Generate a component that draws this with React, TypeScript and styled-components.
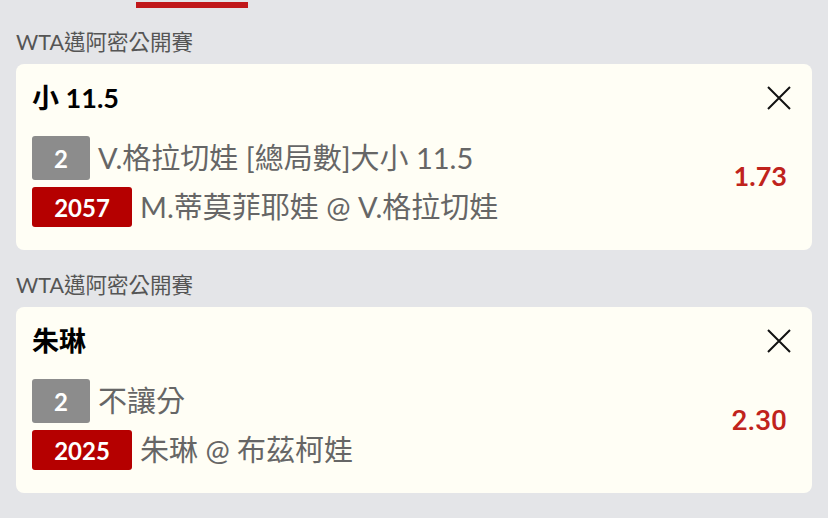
import React from "react";
import styled, { createGlobalStyle } from "styled-components";

const GlobalStyle = createGlobalStyle`
  html, body { margin: 0; padding: 0; background: #e4e5e8; }
  body { font-family: Lato, "Noto Sans CJK TC", sans-serif; }
`;

const Page = styled.div`
  width: 828px;
  height: 518px;
  background: #e4e5e8;
  padding: 0 16px;
  box-sizing: border-box;
  overflow: hidden;
`;

const TabStrip = styled.div`
  height: 8px;
  display: flex;
  align-items: flex-end;
`;

const TabIndicator = styled.div`
  margin-left: 120px;
  width: 112px;
  height: 6px;
  background: #c0181a;
`;

const Section = styled.section<{ $first?: boolean }>`
  padding-top: ${(p) => (p.$first ? "20px" : "21px")};
`;

const League = styled.div`
  font-family: Lato, "Noto Sans CJK TC", sans-serif;
  font-size: 21.5px;
  line-height: 28px;
  color: #555555;
  margin-bottom: 8px;
`;

const Card = styled.div`
  background: #fffef5;
  border-radius: 8px;
  padding: 18px 21px 23px 16px;
  box-sizing: border-box;
  height: 186px;
`;

const CardHeader = styled.div`
  display: flex;
  align-items: center;
  justify-content: space-between;
  height: 32px;
`;

const Title = styled.div`
  font-family: Lato, "Noto Sans CJK TC", sans-serif;
  font-weight: 700;
  font-size: 27px;
  line-height: 32px;
  color: #000;
`;

const CloseButton = styled.button`
  border: none;
  background: none;
  padding: 0;
  width: 24px;
  height: 24px;
  display: flex;
  cursor: pointer;
`;

const CardBody = styled.div`
  display: flex;
  align-items: center;
  justify-content: space-between;
  margin-top: 22px;
`;

const Selections = styled.div`
  display: flex;
  flex-direction: column;
  gap: 7px;
`;

const Row = styled.div`
  display: flex;
  align-items: center;
  gap: 8px;
`;

const Badge = styled.div<{ $variant: "gray" | "red" }>`
  box-sizing: border-box;
  width: ${(p) => (p.$variant === "gray" ? "58px" : "100px")};
  height: ${(p) => (p.$variant === "gray" ? "44px" : "40px")};
  border-radius: 3px;
  background: ${(p) => (p.$variant === "gray" ? "#8c8c8c" : "#b50000")};
  color: #fff;
  font-family: Lato, sans-serif;
  font-weight: 700;
  font-size: 24px;
  display: flex;
  align-items: center;
  justify-content: center;
`;

const RowText = styled.div`
  font-family: Lato, "Noto Sans CJK TC", sans-serif;
  font-size: 29px;
  line-height: 36px;
  color: #666666;
  white-space: nowrap;
`;

const Odds = styled.div<{ $alt?: boolean }>`
  font-family: ${(p) => (p.$alt ? 'Roboto, "Liberation Sans", sans-serif' : "Lato, sans-serif")};
  font-weight: ${(p) => (p.$alt ? 500 : 700)};
  font-size: ${(p) => (p.$alt ? "28px" : "27px")};
  color: #c0231c;
  margin-right: 4px;
  margin-top: ${(p) => (p.$alt ? "-8px" : "-12px")};
`;

const CloseIcon = () => (
  <svg width="24" height="24" viewBox="0 0 24 24">
    <path d="M1 1 L23 23 M23 1 L1 23" stroke="#111" strokeWidth="2" fill="none" />
  </svg>
);

type Bet = {
  league: string;
  title: string;
  market: string;
  code: string;
  match: string;
  odds: string;
  alt?: boolean;
};

const bets: Bet[] = [
  {
    league: "WTA邁阿密公開賽",
    title: "小 11.5",
    market: "V.格拉切娃 [總局數]大小 11.5",
    code: "2057",
    match: "M.蒂莫菲耶娃 @ V.格拉切娃",
    odds: "1.73",
  },
  {
    league: "WTA邁阿密公開賽",
    title: "朱琳",
    market: "不讓分",
    code: "2025",
    match: "朱琳 @ 布茲柯娃",
    odds: "2.30",
    alt: true,
  },
];

export default function App() {
  return (
    <>
      <GlobalStyle />
      <Page>
        <TabStrip>
          <TabIndicator />
        </TabStrip>
        {bets.map((b, i) => (
          <Section key={i} $first={i === 0}>
            <League>{b.league}</League>
            <Card>
              <CardHeader>
                <Title>{b.title}</Title>
                <CloseButton aria-label="close">
                  <CloseIcon />
                </CloseButton>
              </CardHeader>
              <CardBody>
                <Selections>
                  <Row>
                    <Badge $variant="gray">2</Badge>
                    <RowText>{b.market}</RowText>
                  </Row>
                  <Row>
                    <Badge $variant="red">{b.code}</Badge>
                    <RowText>{b.match}</RowText>
                  </Row>
                </Selections>
                <Odds $alt={b.alt}>{b.odds}</Odds>
              </CardBody>
            </Card>
          </Section>
        ))}
      </Page>
    </>
  );
}
